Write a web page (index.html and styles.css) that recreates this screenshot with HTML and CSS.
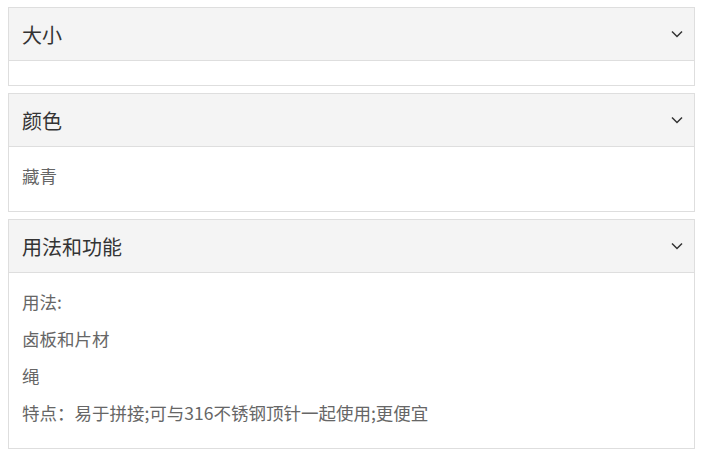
FILE: index.html
```html
<!DOCTYPE html>
<html lang="zh">
<head>
  <meta charset="UTF-8" />
  <meta name="viewport" content="width=device-width, initial-scale=1.0" />
  <title>产品详情</title>
  <link rel="stylesheet" href="styles.css">
</head>
<body>
  <div class="accordion">
    <div class="panel">
      <div class="panel-header">
        <span class="panel-title">大小</span>
        <svg class="chevron" width="12" height="8" viewBox="0 0 12 8"><path d="M1 1.5 L6 6.5 L11 1.5" /></svg>
      </div>
      <div class="panel-body"></div>
    </div>

    <div class="panel">
      <div class="panel-header">
        <span class="panel-title">颜色</span>
        <svg class="chevron" width="12" height="8" viewBox="0 0 12 8"><path d="M1 1.5 L6 6.5 L11 1.5" /></svg>
      </div>
      <div class="panel-body">
        <p>藏青</p>
      </div>
    </div>

    <div class="panel">
      <div class="panel-header">
        <span class="panel-title">用法和功能</span>
        <svg class="chevron" width="12" height="8" viewBox="0 0 12 8"><path d="M1 1.5 L6 6.5 L11 1.5" /></svg>
      </div>
      <div class="panel-body">
        <p>用法:</p>
        <p>卤板和片材</p>
        <p>绳</p>
        <p>特点：易于拼接;可与316不锈钢顶针一起使用;更便宜</p>
      </div>
    </div>
  </div>
</body>
</html>
```

FILE: styles.css
```css
body {
  margin: 7px 8px;
  background: #fff;
  font-family: "Noto Sans CJK SC", "Microsoft YaHei", sans-serif;
}

.accordion {
  width: 687px;
}

.panel {
  border: 1px solid #dedede;
  margin-bottom: 7px;
  background: #fff;
}

.panel-header {
  height: 52px;
  display: flex;
  align-items: center;
  justify-content: space-between;
  padding: 0 11px 0 13px;
  background: #f4f4f4;
  border-bottom: 1px solid #dedede;
}

.panel-title {
  font-size: 20px;
  color: #333;
}

.chevron path {
  fill: none;
  stroke: #333;
  stroke-width: 1.5;
}

.panel-body {
  min-height: 24px;
  box-sizing: border-box;
  padding: 12px 13px 10px;
  font-size: 17.5px;
  line-height: 24px;
  color: #666;
}

.panel-body:empty {
  padding: 0;
}

.panel-body p {
  margin: 5px 0 13px;
}
```
